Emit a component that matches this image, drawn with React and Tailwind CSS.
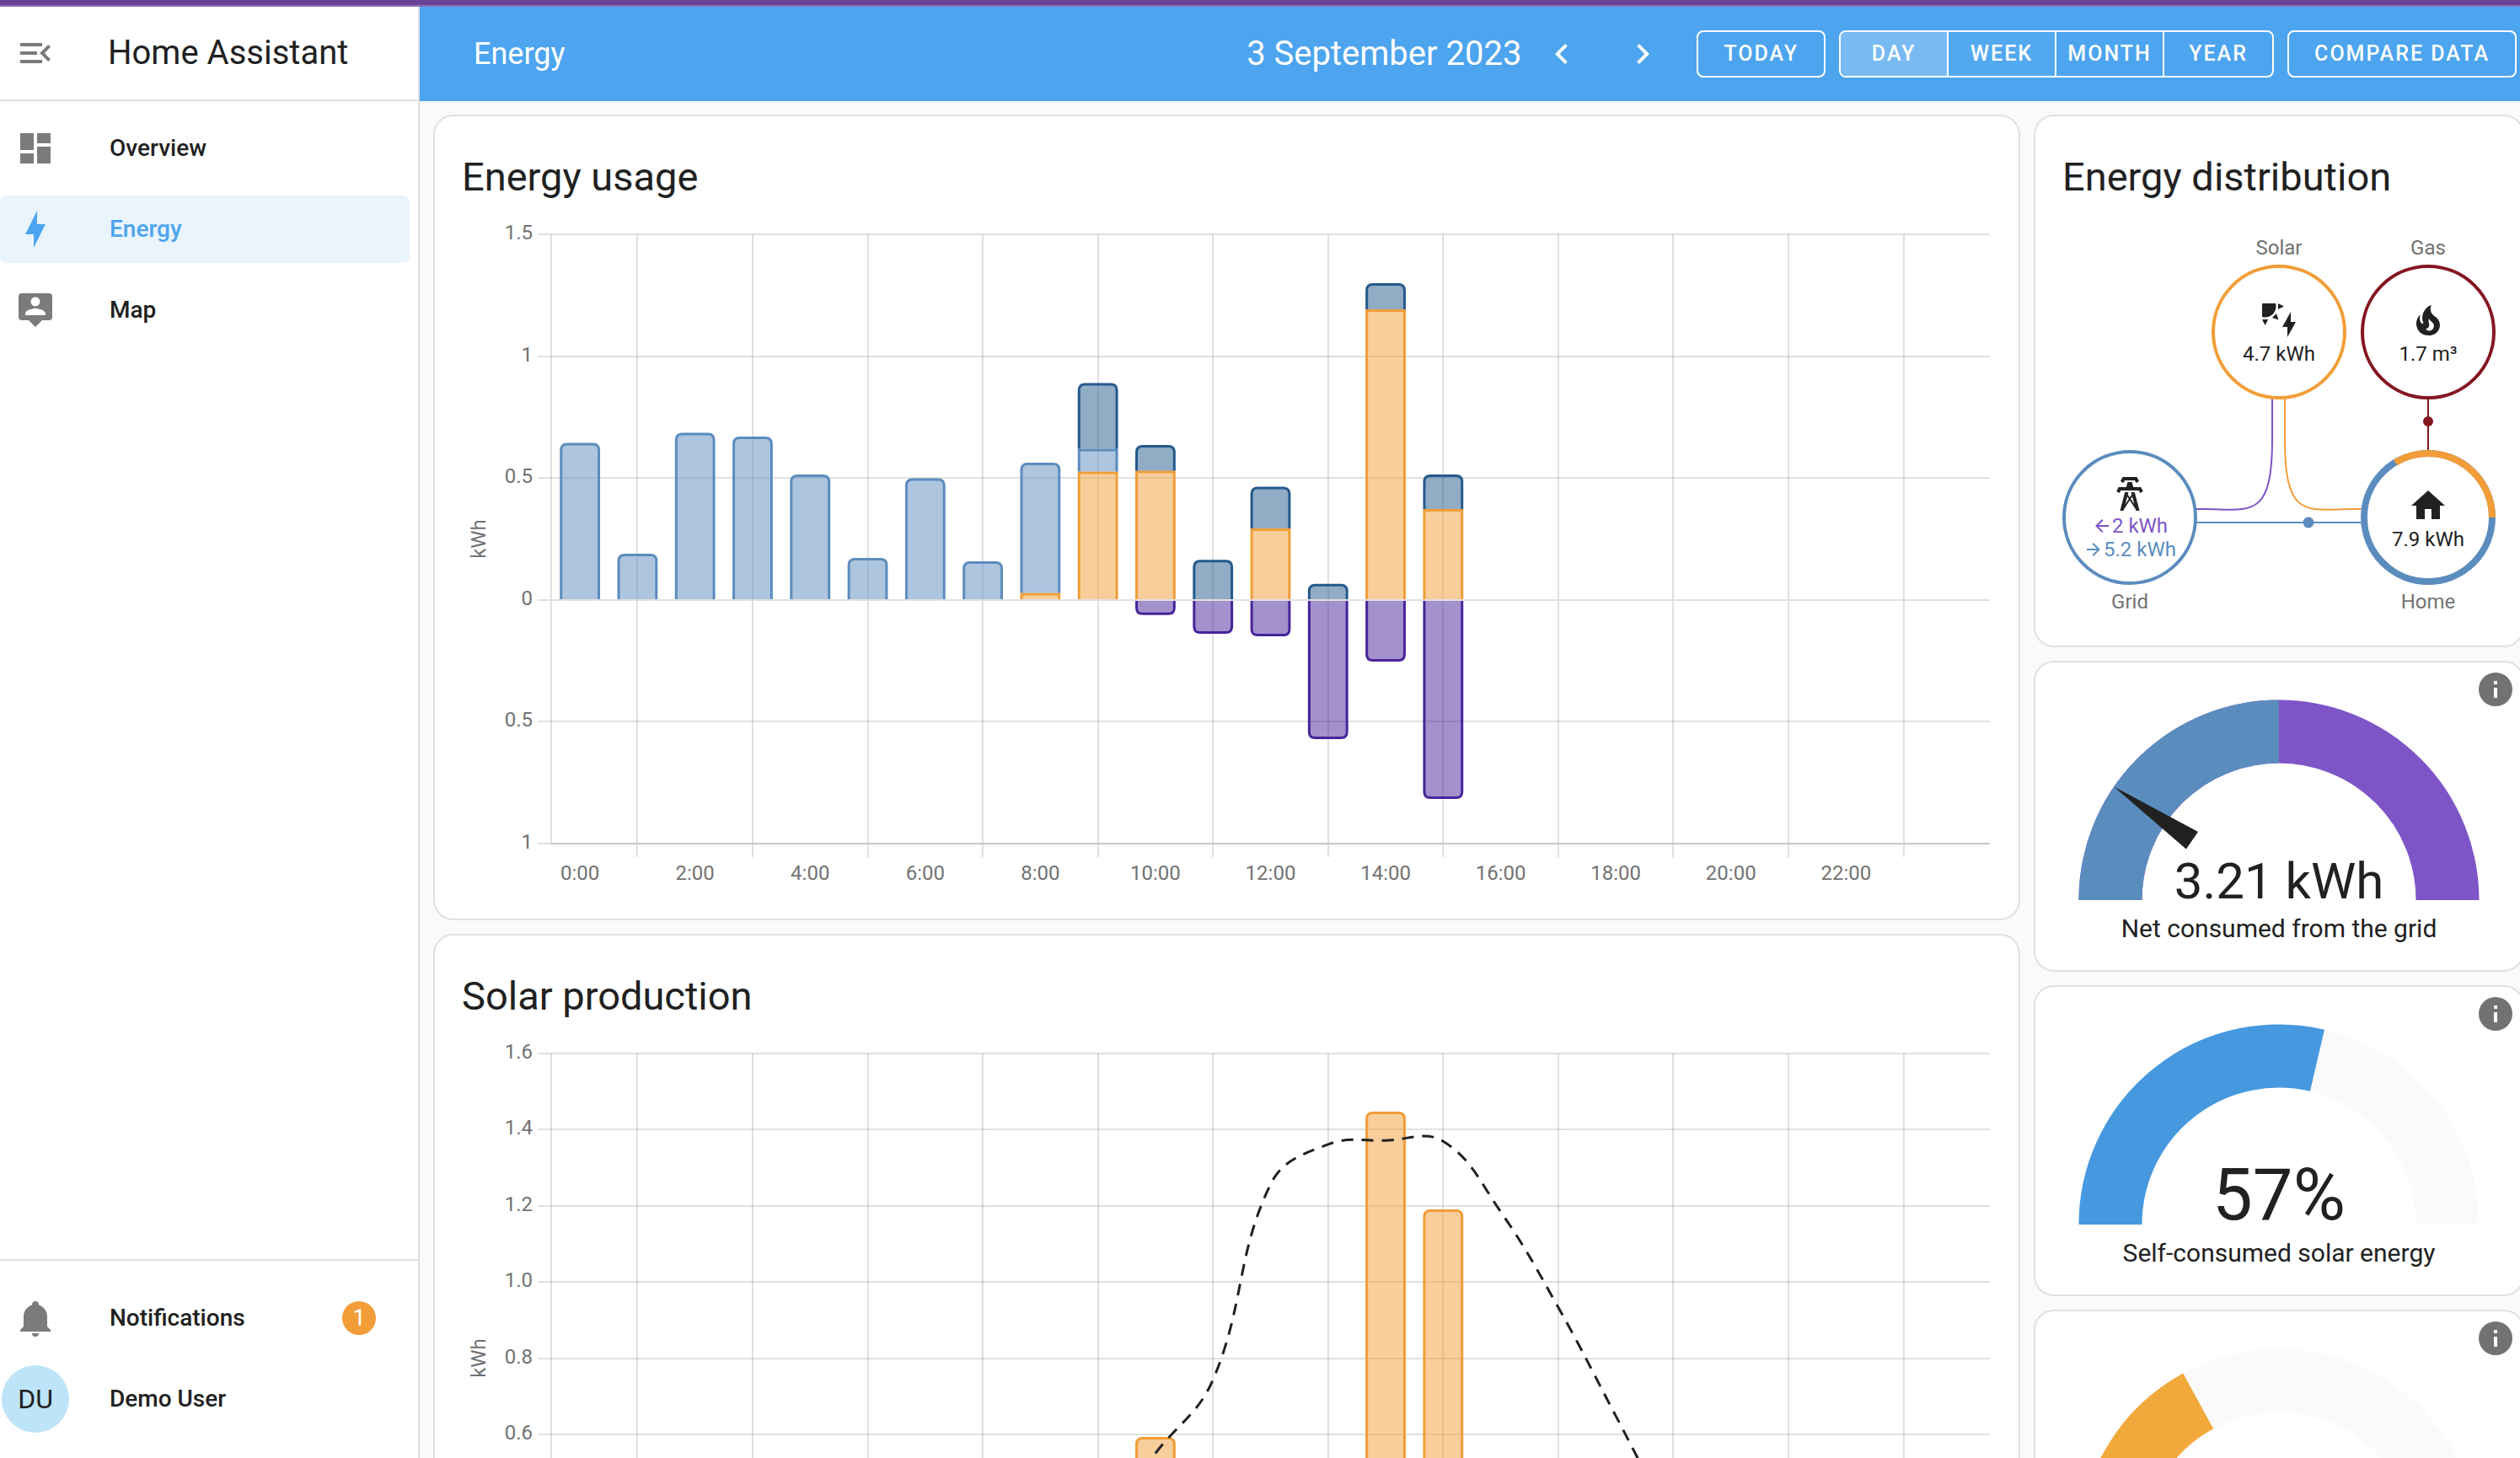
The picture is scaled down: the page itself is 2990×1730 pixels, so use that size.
import React, { useState } from "react";

// material design icon paths, 24x24 grid
const icons = {
  menuOpen: "M21,15.61L19.59,17L14.58,12L19.59,7L21,8.39L17.44,12L21,15.61M3,6H16V8H3V6M3,13V11H13V13H3M3,18V16H16V18H3Z",
  dashboard: "M13,3V9H21V3M13,21H21V11H13M3,21H11V15H3M3,13H11V3H3V13Z",
  bolt: "M11 15H6L13 1V9H18L11 23V15Z",
  account: "M20,2H4A2,2 0 0,0 2,4V16A2,2 0 0,0 4,18H8L12,22L16,18H20A2,2 0 0,0 22,16V4A2,2 0 0,0 20,2M12,4.3C13.5,4.3 14.7,5.5 14.7,7C14.7,8.5 13.5,9.7 12,9.7C10.5,9.7 9.3,8.5 9.3,7C9.3,5.5 10.5,4.3 12,4.3M18,15H6V14.1C6,12.1 10,11 12,11C14,11 18,12.1 18,14.1V15Z",
  bell: "M21,19V20H3V19L5,17V11C5,7.9 7.03,5.17 10,4.29C10,4.19 10,4.1 10,4A2,2 0 0,1 12,2A2,2 0 0,1 14,4C14,4.1 14,4.19 14,4.29C16.97,5.17 19,7.9 19,11V17L21,19M14,21A2,2 0 0,1 12,23A2,2 0 0,1 10,21",
  left: "M15.41,16.58L10.83,12L15.41,7.41L14,6L8,12L14,18L15.41,16.58Z",
  right: "M8.59,16.58L13.17,12L8.59,7.41L10,6L16,12L10,18L8.59,16.58Z",
  info: "M13,9H11V7H13M13,17H11V11H13M12,2A10,10 0 0,0 2,12A10,10 0 0,0 12,22A10,10 0 0,0 22,12A10,10 0 0,0 12,2Z",
  solar: "M11.45,2V5.55L15,3.77L11.45,2M10.45,8L8,10.46L11.75,11.71L10.45,8M2,11.45L3.77,15L5.55,11.45H2M10,2H2V10C2.57,10.17 3.17,10.25 3.77,10.25C7.35,10.26 10.26,7.35 10.27,3.75C10.26,3.16 10.17,2.57 10,2M17,22V16H14L19,7V13H22L17,22Z",
  fire: "M17.66 11.2C17.43 10.9 17.15 10.64 16.89 10.38C16.22 9.78 15.46 9.35 14.82 8.72C13.33 7.26 13 4.85 13.95 3C13 3.23 12.17 3.75 11.46 4.32C8.87 6.4 7.85 10.07 9.07 13.22C9.11 13.32 9.15 13.42 9.15 13.55C9.15 13.77 9 13.97 8.8 14.05C8.57 14.15 8.33 14.09 8.14 13.93C8.08 13.88 8.04 13.83 8 13.76C6.87 12.33 6.69 10.28 7.45 8.64C5.78 10 4.87 12.3 5 14.47C5.06 14.97 5.12 15.47 5.29 15.97C5.43 16.57 5.7 17.17 6 17.7C7.08 19.43 8.95 20.67 10.96 20.92C13.1 21.19 15.39 20.8 17.03 19.32C18.86 17.66 19.5 15 18.56 12.72L18.43 12.46C18.22 12 17.66 11.2 17.66 11.2M14.5 17.5C14.22 17.74 13.76 18 13.4 18.1C12.28 18.5 11.16 17.94 10.5 17.28C11.69 17 12.4 16.12 12.61 15.23C12.78 14.43 12.46 13.77 12.33 13C12.21 12.26 12.23 11.63 12.5 10.94C12.69 11.32 12.89 11.7 13.13 12C13.9 13 15.11 13.44 15.37 14.8C15.41 14.94 15.43 15.08 15.43 15.23C15.46 16.05 15.1 16.95 14.5 17.5H14.5Z",
  tower: "M8.28,5.45L6.5,4.55L7.76,2H16.23L17.5,4.55L15.72,5.44L15,4H9L8.28,5.45M18.62,8H14.09L13.3,5H10.7L9.91,8H5.38L4.1,10.55L5.89,11.44L6.62,10H17.38L18.1,11.45L19.89,10.56L18.62,8M17.77,22H15.7L15.46,21.1L12,15.9L8.53,21.1L8.3,22H6.23L9.12,11H11.19L10.83,12.35L12,14.1L13.16,12.35L12.81,11H14.88L17.77,22M11.4,15L10.5,13.65L9.32,18.13L11.4,15M14.68,18.12L13.5,13.64L12.6,15L14.68,18.12Z",
  home: "M10,20V14H14V20H19V12H22L12,3L2,12H5V20H10Z",
  arrowLeft: "M20,11V13H8L13.5,18.5L12.08,19.92L4.16,12L12.08,4.08L13.5,5.5L8,11H20Z",
  arrowRight: "M4,11V13H16L10.5,18.5L11.92,19.92L19.84,12L11.92,4.08L10.5,5.5L16,11H4Z",
};

const Icon = ({ name, className = "size-12" }) => (
  <svg viewBox="0 0 24 24" fill="currentColor" className={`shrink-0 ${className}`} aria-hidden="true">
    <path d={icons[name]} />
  </svg>
);

const GRID = "#5b8cbe";
const SOLAR = "#f29d38";
const BATTERY = "#245a8c";
const RETURN = "#47249b";

// stacked from the zero line up, value = top of the segment in kWh
const usage = [
  { up: [[0.645, GRID]] },
  { up: [[0.19, GRID]] },
  { up: [[0.687, GRID]] },
  { up: [[0.671, GRID]] },
  { up: [[0.516, GRID]] },
  { up: [[0.173, GRID]] },
  { up: [[0.5, GRID]] },
  { up: [[0.159, GRID]] },
  { up: [[0.029, SOLAR], [0.564, GRID]] },
  { up: [[0.528, SOLAR], [0.621, GRID], [0.891, BATTERY]] },
  { up: [[0.531, SOLAR], [0.637, BATTERY]], down: 0.061 },
  { up: [[0.165, BATTERY]], down: 0.138 },
  { up: [[0.294, SOLAR], [0.465, BATTERY]], down: 0.149 },
  { up: [[0.067, BATTERY]], down: 0.571 },
  { up: [[1.194, SOLAR], [1.301, BATTERY]], down: 0.253 },
  { up: [[0.374, SOLAR], [0.516, BATTERY]], down: 0.817 },
];

const production = [
  {}, {}, {}, {}, {}, {}, {}, {},
  { up: [[0.029, SOLAR]] },
  { up: [[0.528, SOLAR]] },
  { up: [[0.593, SOLAR]] },
  { up: [[0.138, SOLAR]] },
  { up: [[0.443, SOLAR]] },
  { up: [[0.53, SOLAR]] },
  { up: [[1.447, SOLAR]] },
  { up: [[1.19, SOLAR]] },
];

const forecast = [
  [8, 0.18], [9, 0.35], [10, 0.55], [11, 0.743], [12, 1.256], [13, 1.361],
  [14, 1.371], [15, 1.369], [16, 1.184], [17, 0.933], [18, 0.648], [19, 0.36], [20, 0.1],
];

const LEFT = 106;
const RIGHT = 1813;
const TOP = 28;
const BOTTOM = 751;
const SLOT = (RIGHT - LEFT) / 25;
const hourX = (h) => LEFT + (h + 0.5) * SLOT;

// cubic spline through the points, same idea as chart.js tension
const smoothPath = (pts, tension = 0.4) => {
  const controls = pts.map((p, i) => {
    const prev = pts[i - 1] || p;
    const next = pts[i + 1] || p;
    const d1 = Math.hypot(p[0] - prev[0], p[1] - prev[1]);
    const d2 = Math.hypot(next[0] - p[0], next[1] - p[1]);
    const a = (tension * d1) / (d1 + d2);
    const b = (tension * d2) / (d1 + d2);
    const dx = next[0] - prev[0];
    const dy = next[1] - prev[1];
    return [[p[0] - a * dx, p[1] - a * dy], [p[0] + b * dx, p[1] + b * dy]];
  });
  return pts
    .map((p, i) => (i === 0 ? `M${p}` : `C${controls[i - 1][1]} ${controls[i][0]} ${p}`))
    .join(" ");
};

const BORDER = 3;

const Bar = ({ hour, from, to, color, rounded }) => {
  const half = SLOT * 0.35 - BORDER / 2;
  const x1 = hourX(hour) - half;
  const x2 = hourX(hour) + half;
  const dir = to < from ? 1 : -1;
  const y = to + (dir * BORDER) / 2;
  const r = rounded ? 7 : 0;
  return (
    <path
      d={`M${x1} ${from}V${y + r * dir}Q${x1} ${y} ${x1 + r} ${y}H${x2 - r}Q${x2} ${y} ${x2} ${y + r * dir}V${from}`}
      fill={color}
      fillOpacity="0.5"
      stroke={color}
      strokeWidth={BORDER}
    />
  );
};

const Chart = ({ label, ticks, zero, unit, data, line }) => {
  const step = (BOTTOM - TOP) / (ticks.length - 1);
  return (
    <svg viewBox="0 0 1815 808" className="mt-4 w-full h-auto" role="img" aria-label={label}>
      <g stroke="#000" strokeOpacity="0.12" strokeWidth="2">
        {ticks.map((t, i) => (
          <path key={i} d={`M90 ${Math.round(TOP + i * step)}H${RIGHT}`} />
        ))}
        <path d={`M${LEFT} ${TOP}V${BOTTOM}`} />
        {Array.from({ length: 12 }, (_, i) => (
          <path key={i} d={`M${Math.round(hourX(2 * i + 1))} ${TOP}V${BOTTOM + 16}`} />
        ))}
      </g>
      <path d={`M${LEFT} ${BOTTOM}H${RIGHT}`} stroke="#c6c6c6" strokeWidth="2" />
      <g fill="#727272" fontSize="24">
        {ticks.map((t, i) => (
          <text key={i} x="84" y={Math.round(TOP + i * step) + 6} textAnchor="end">{t}</text>
        ))}
        {Array.from({ length: 12 }, (_, i) => (
          <text key={i} x={hourX(2 * i)} y="794" textAnchor="middle">{2 * i}:00</text>
        ))}
        <text transform={`rotate(-90 28 ${(TOP + BOTTOM) / 2})`} x="28" y={(TOP + BOTTOM) / 2} textAnchor="middle">
          kWh
        </text>
      </g>
      {data.map(({ up = [], down }, hour) => (
        <g key={hour}>
          {up.map(([value, color], i) => (
            <Bar
              key={i}
              hour={hour}
              from={zero - (i ? up[i - 1][0] : 0) * unit}
              to={zero - value * unit}
              color={color}
              rounded={i === up.length - 1}
            />
          ))}
          {down && <Bar hour={hour} from={zero} to={zero + down * unit} color={RETURN} rounded />}
        </g>
      ))}
      {zero < BOTTOM && <path d={`M90 ${Math.round(zero)}H${RIGHT}`} stroke="#e0e0e0" strokeWidth="2" />}
      {line && (
        <path
          d={smoothPath(line.map(([h, v]) => [hourX(h), zero - v * unit]))}
          fill="none"
          stroke="#212121"
          strokeWidth="3"
          strokeDasharray="14 10"
        />
      )}
    </svg>
  );
};

const Card = ({ title, children, className = "" }) => (
  <section className={`relative rounded-3xl border-2 border-[#e0e0e0] bg-white px-8 ${className}`}>
    {title && <h2 className="pt-12 text-[47px] leading-[48px]">{title}</h2>}
    {children}
  </section>
);

const NavItem = ({ icon, label, active }) => (
  <a
    href="#"
    aria-current={active ? "page" : undefined}
    className={`mr-[10px] flex h-20 items-center rounded-lg text-[28px] font-medium ${
      active ? "bg-[#e9f4fd] text-[#4ca5ee]" : ""
    }`}
  >
    <span className={`ml-0.5 mr-12 flex w-20 justify-center ${active ? "" : "text-[#7b7b7b]"}`}>
      <Icon name={icon} />
    </span>
    {label}
  </a>
);

const Sidebar = () => (
  <aside className="flex w-[498px] shrink-0 flex-col border-r-2 border-[#e0e0e0] bg-white">
    <div className="flex h-28 items-center border-b-2 border-[#e0e0e0]">
      <button aria-label="Collapse sidebar" className="ml-0.5 mr-[46px] flex w-20 justify-center text-[#7b7b7b]">
        <Icon name="menuOpen" />
      </button>
      <h1 className="text-[40px] leading-[48px]">Home Assistant</h1>
    </div>
    <nav className="flex flex-1 flex-col gap-4 pt-4">
      <NavItem icon="dashboard" label="Overview" />
      <NavItem icon="bolt" label="Energy" active />
      <NavItem icon="account" label="Map" />
    </nav>
    <div className="flex flex-col gap-4 border-t-2 border-[#e0e0e0] pt-7 pb-[30px]">
      <a href="#" className="flex h-20 items-center pr-[50px] text-[28px] font-medium">
        <span className="ml-0.5 mr-12 flex w-20 justify-center text-[#7b7b7b]">
          <Icon name="bell" />
        </span>
        Notifications
        <span className="ml-auto flex size-10 items-center justify-center rounded-full bg-[#f29d38] font-normal text-white">
          1
        </span>
      </a>
      <a href="#" className="flex h-20 items-center text-[28px] font-medium">
        <span className="ml-0.5 mr-12 flex size-20 items-center justify-center rounded-full bg-[#bee4f9] text-[32px] font-normal">
          DU
        </span>
        Demo User
      </a>
    </div>
  </aside>
);

const Header = () => {
  const [period, setPeriod] = useState("Day");
  return (
    <header className="flex h-28 items-center bg-[#4ca5ee] pl-16 pr-1 text-white">
      <h2 className="text-[36px]">Energy</h2>
      <div className="ml-auto flex items-center whitespace-nowrap">
        <span className="text-[40px]">3 September 2023</span>
        <button aria-label="Previous day" className="flex size-24 items-center justify-center">
          <Icon name="left" />
        </button>
        <button aria-label="Next day" className="flex size-24 items-center justify-center">
          <Icon name="right" />
        </button>
        <div className="ml-4 flex gap-4 text-[25px] font-medium tracking-[0.08em]">
          <button className="h-14 rounded-lg border-2 border-white px-[30px] uppercase">Today</button>
          <div className="flex h-14 divide-x-2 divide-white overflow-hidden rounded-lg border-2 border-white">
            {["Day", "Week", "Month", "Year"].map((p) => (
              <button
                key={p}
                onClick={() => setPeriod(p)}
                className={`w-32 uppercase ${p === period ? "bg-[#78baf2]" : p === "Week" ? "bg-[#53a9ef]" : ""}`}
              >
                {p}
              </button>
            ))}
          </div>
          <button className="h-14 rounded-lg border-2 border-white px-[30px] uppercase">Compare data</button>
        </div>
      </div>
    </header>
  );
};

const Node = ({ name, labelTop, border, children }) => {
  const label = <div className="text-[24px] leading-6 text-[#727272]">{name}</div>;
  return (
    <div className="relative flex flex-col items-center gap-2">
      {labelTop && label}
      <div className={`relative flex size-40 flex-col items-center justify-center rounded-full bg-white text-[24px] leading-6 ${border}`}>
        {children}
      </div>
      {!labelTop && label}
    </div>
  );
};

const Distribution = () => (
  <Card title="Energy distribution" className="pb-10">
    <div className="relative mt-12">
      <svg viewBox="0 0 514 444" className="absolute inset-0 size-full" fill="none" strokeWidth="2" aria-hidden="true">
        <path d="M249 190V240c0 96 -27 82 -82 82H158" stroke="#7d55c7" />
        <path d="M264 190V240c0 96 27 82 82 82H356" stroke="#f29d38" />
        <path d="M158 338H356" stroke="#5b8cbe" />
        <circle cx="292" cy="338" r="6.5" fill="#5b8cbe" />
        <path d="M434 190V254" stroke="#841720" />
        <circle cx="434" cy="218" r="6" fill="#841720" />
      </svg>
      <div className="flex justify-between">
        <div className="w-40" />
        <Node name="Solar" labelTop border="border-4 border-[#f29d38]">
          <Icon name="solar" className="mb-1 size-12" />
          4.7 kWh
        </Node>
        <Node name="Gas" labelTop border="border-4 border-[#841720]">
          <Icon name="fire" className="mb-1 size-12" />
          1.7 m³
        </Node>
      </div>
      <div className="mt-15 flex justify-between">
        <Node name="Grid" border="border-4 border-[#5b8cbe]">
          <Icon name="tower" className="size-12" />
          <span className="flex h-7 items-center text-[#7d55c7]">
            <Icon name="arrowLeft" className="size-6" />
            2 kWh
          </span>
          <span className="flex h-7 items-center text-[#5b8cbe]">
            <Icon name="arrowRight" className="size-6" />
            5.2 kWh
          </span>
        </Node>
        <Node name="Home" border="">
          <svg viewBox="-80 -80 160 160" className="absolute inset-0 size-full" fill="none" strokeWidth="8">
            <circle r="76" stroke="#5b8cbe" />
            <path d="M-38.8 -65.3A76 76 0 0 1 76 0" stroke="#f29d38" />
          </svg>
          <Icon name="home" className="mb-1 size-12" />
          7.9 kWh
        </Node>
      </div>
    </div>
  </Card>
);

const point = (fraction) => {
  const a = Math.PI * (1 - fraction);
  return `${40 * Math.cos(a)} ${-40 * Math.sin(a)}`;
};

const Gauge = ({ track, color, fill, needle, value, valueClass, label }) => (
  <Card className="py-8">
    <button aria-label={`About ${label}`} className="absolute top-2 right-2 text-[#727272]">
      <Icon name="info" />
    </button>
    <div className="relative mx-auto w-[500px]">
      <svg viewBox="-50 -50 100 50" className="w-full" fill="none" strokeWidth="15" aria-hidden="true">
        <path d="M-40 0A40 40 0 0 1 40 0" stroke={track} />
        <path d={`M-40 0A40 40 0 0 1 ${point(fill)}`} stroke={color} />
        {needle && <path d="M-25 -2.5L-47.5 0L-25 2.5Z" fill="#212121" stroke="none" transform={`rotate(${needle})`} />}
      </svg>
      <div className={`absolute inset-x-0 -bottom-2 text-center leading-none ${valueClass}`}>{value}</div>
    </div>
    <p className="mt-4 text-center text-[30px] leading-[35px]">{label}</p>
  </Card>
);

const App = () => {
  return (
    <div className="flex h-screen flex-col overflow-hidden bg-[#fafafa] font-['Roboto',sans-serif] text-[#212121]">
      <div className="h-2 shrink-0 border-b-2 border-[#8d6eb3] bg-[#694399]" />
      <div className="flex min-h-0 flex-1">
        <Sidebar />
        <div className="flex min-w-0 flex-1 flex-col">
          <Header />
          <main className="-mr-[5px] grid min-h-0 flex-1 grid-cols-[minmax(0,1fr)_582px] items-start gap-4 overflow-y-auto pt-4 pl-4 [scrollbar-width:none]">
            <div className="flex flex-col gap-4">
              <Card title="Energy usage" className="pb-8">
                <Chart
                  label="Energy usage per hour"
                  ticks={["1.5", "1", "0.5", "0", "0.5", "1"]}
                  zero={462}
                  unit={289}
                  data={usage}
                />
              </Card>
              <Card title="Solar production" className="pb-8">
                <Chart
                  label="Solar production per hour"
                  ticks={["1.6", "1.4", "1.2", "1.0", "0.8", "0.6", "0.4", "0.2", "0"]}
                  zero={751}
                  unit={452}
                  data={production}
                  line={forecast}
                />
              </Card>
            </div>
            <div className="flex flex-col gap-4">
              <Distribution />
              <Gauge
                track="#7d55c7"
                color="#5b8cbe"
                fill={0.5}
                needle={34.5}
                value="3.21 kWh"
                valueClass="text-[60px]"
                label="Net consumed from the grid"
              />
              <Gauge
                track="#fafafa"
                color="#4699df"
                fill={0.573}
                value="57%"
                valueClass="text-[85px]"
                label="Self-consumed solar energy"
              />
              <Gauge
                track="#fafafa"
                color="#f2a93c"
                fill={0.341}
                value="34%"
                valueClass="text-[85px]"
                label="Self-sufficiency"
              />
            </div>
          </main>
        </div>
      </div>
    </div>
  );
};

export default App;
